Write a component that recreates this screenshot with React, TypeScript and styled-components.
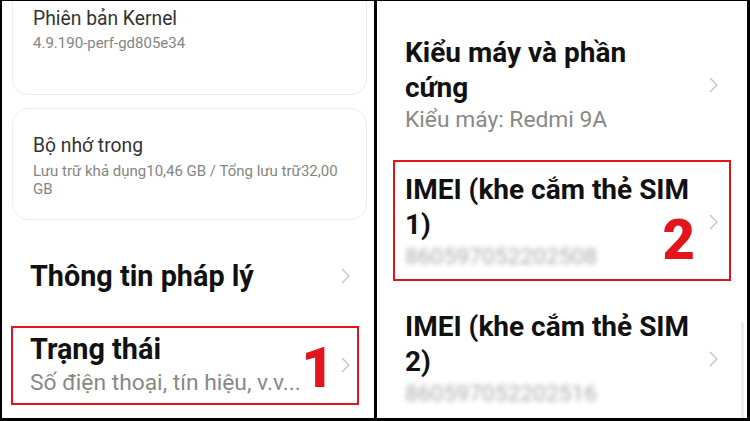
import React, { FC } from 'react';
import styled, { createGlobalStyle, css } from 'styled-components';

const GlobalStyle = createGlobalStyle`
  html, body {
    margin: 0;
    padding: 0;
    background: #000;
  }
  body {
    font-family: Roboto, "Noto Sans", "Liberation Sans", sans-serif;
  }
`;

const Chevron: FC = () => (
  <ChevronIcon width="9" height="16" viewBox="0 0 9 16">
    <polyline points="1,1 8,8 1,15" fill="none" stroke="#c2c2c2" strokeWidth="1.3" />
  </ChevronIcon>
);

interface RowProps {
  title: string[];
  subtitle?: string;
  blurred?: boolean;
  marker?: string;
  highlighted?: boolean;
}

const LeftRow: FC<RowProps> = ({ title, subtitle, marker, highlighted }) => (
  <LeftRowBox $highlighted={highlighted}>
    <RowText>
      {title.map(line => (
        <LeftTitle key={line}>{line}</LeftTitle>
      ))}
      {subtitle ? <LeftSubtitle>{subtitle}</LeftSubtitle> : null}
    </RowText>
    <Chevron />
    {marker ? <Marker $right={23} $bottom={7}>{marker}</Marker> : null}
  </LeftRowBox>
);

const RightRow: FC<RowProps> = ({ title, subtitle, blurred, marker, highlighted }) => (
  <RightRowBox $highlighted={highlighted}>
    <RowText>
      {title.map(line => (
        <RightTitle key={line}>{line}</RightTitle>
      ))}
      {subtitle ? <RightSubtitle $blurred={blurred}>{subtitle}</RightSubtitle> : null}
    </RowText>
    <Chevron />
    {marker ? <Marker $right={34} $bottom={11}>{marker}</Marker> : null}
  </RightRowBox>
);

export default function App() {
  return (
    <>
      <GlobalStyle />
      <Frame>
        <LeftPanel>
          <Card $cut>
            <CardTitle>Phiên bản Kernel</CardTitle>
            <CardSubtitle>4.9.190-perf-gd805e34</CardSubtitle>
          </Card>
          <Card>
            <CardTitle>Bộ nhớ trong</CardTitle>
            <CardSubtitle>Lưu trữ khả dụng10,46 GB / Tổng lưu trữ32,00 GB</CardSubtitle>
          </Card>
          <LeftList>
            <LeftRow title={['Thông tin pháp lý']} />
            <LeftRow
              title={['Trạng thái']}
              subtitle="Số điện thoại, tín hiệu, v.v..."
              marker="1"
              highlighted
            />
          </LeftList>
        </LeftPanel>
        <RightPanel>
          <RightRow title={['Kiểu máy và phần', 'cứng']} subtitle="Kiểu máy: Redmi 9A" />
          <RightRow
            title={['IMEI (khe cắm thẻ SIM', '1)']}
            subtitle="860597052202508"
            blurred
            marker="2"
            highlighted
          />
          <RightRow title={['IMEI (khe cắm thẻ SIM', '2)']} subtitle="860597052202516" blurred />
          <ScrollBar />
        </RightPanel>
      </Frame>
    </>
  );
}

const Frame = styled.div`
  width: 750px;
  height: 421px;
  box-sizing: border-box;
  padding: 1px 3px 3px 2px;
  display: grid;
  grid-template-columns: 372px 1fr;
  column-gap: 3px;
  background: #000;
  overflow: hidden;
`;

const Panel = styled.div`
  position: relative;
  background: #fff;
  overflow: hidden;
  display: flex;
  flex-direction: column;
`;

const LeftPanel = styled(Panel)`
  padding: 0 7px 0 10px;
  gap: 13px;
`;

const RightPanel = styled(Panel)`
  padding-top: 22px;
  gap: 16px;
`;

const Card = styled.div<{ $cut?: boolean }>`
  border: 1px solid #ededed;
  border-radius: 16px;
  padding: 25px 20px 21px 20px;
  display: flex;
  flex-direction: column;
  gap: 4px;
  ${({ $cut }) =>
    $cut &&
    css`
      border-top: none;
      border-radius: 0 0 16px 16px;
      padding: 6px 20px 42px 20px;
      gap: 3px;
    `}
`;

const CardTitle = styled.div`
  font-size: 19.3px;
  line-height: 24px;
  color: #333;
`;

const CardSubtitle = styled.div`
  font-size: 15px;
  line-height: 18px;
  color: #858585;
`;

const LeftList = styled.div`
  margin: 20px 8px 0 -1px;
  display: flex;
  flex-direction: column;
  gap: 26px;
`;

const RowBox = styled.div<{ $highlighted?: boolean }>`
  position: relative;
  display: flex;
  align-items: center;
  border: 2px solid ${({ $highlighted }) => ($highlighted ? '#e3141b' : 'transparent')};
`;

const LeftRowBox = styled(RowBox)`
  padding: 5px 7px 6px 17px;
`;

const RightRowBox = styled(RowBox)`
  margin: 0 16px;
  padding: 10px 11px 7px 10px;
`;

const RowText = styled.div`
  flex: 1;
  display: flex;
  flex-direction: column;
  align-items: flex-start;
  min-width: 0;
`;

const LeftTitle = styled.div`
  font-size: 28.8px;
  line-height: 32px;
  font-weight: 700;
  color: #111;
`;

const LeftSubtitle = styled.div`
  margin-top: 4px;
  font-size: 22.8px;
  line-height: 28px;
  color: #888;
  white-space: nowrap;
`;

const RightTitle = styled.div`
  font-size: 28px;
  line-height: 35px;
  font-weight: 700;
  color: #111;
  white-space: nowrap;
`;

const RightSubtitle = styled.div<{ $blurred?: boolean }>`
  font-size: 22.8px;
  line-height: 30px;
  color: #888;
  ${({ $blurred }) =>
    $blurred &&
    css`
      color: #aaa;
      filter: blur(2.5px);
    `}
`;

const ChevronIcon = styled.svg`
  flex-shrink: 0;
  display: block;
`;

const Marker = styled.span<{ $right: number; $bottom: number }>`
  position: absolute;
  right: ${({ $right }) => $right}px;
  bottom: ${({ $bottom }) => $bottom}px;
  font-size: 56px;
  line-height: 1;
  font-weight: 900;
  color: #e3141b;
`;

const ScrollBar = styled.div`
  position: absolute;
  right: 3px;
  top: 321px;
  width: 3px;
  height: 100px;
  background: #ececec;
`;
